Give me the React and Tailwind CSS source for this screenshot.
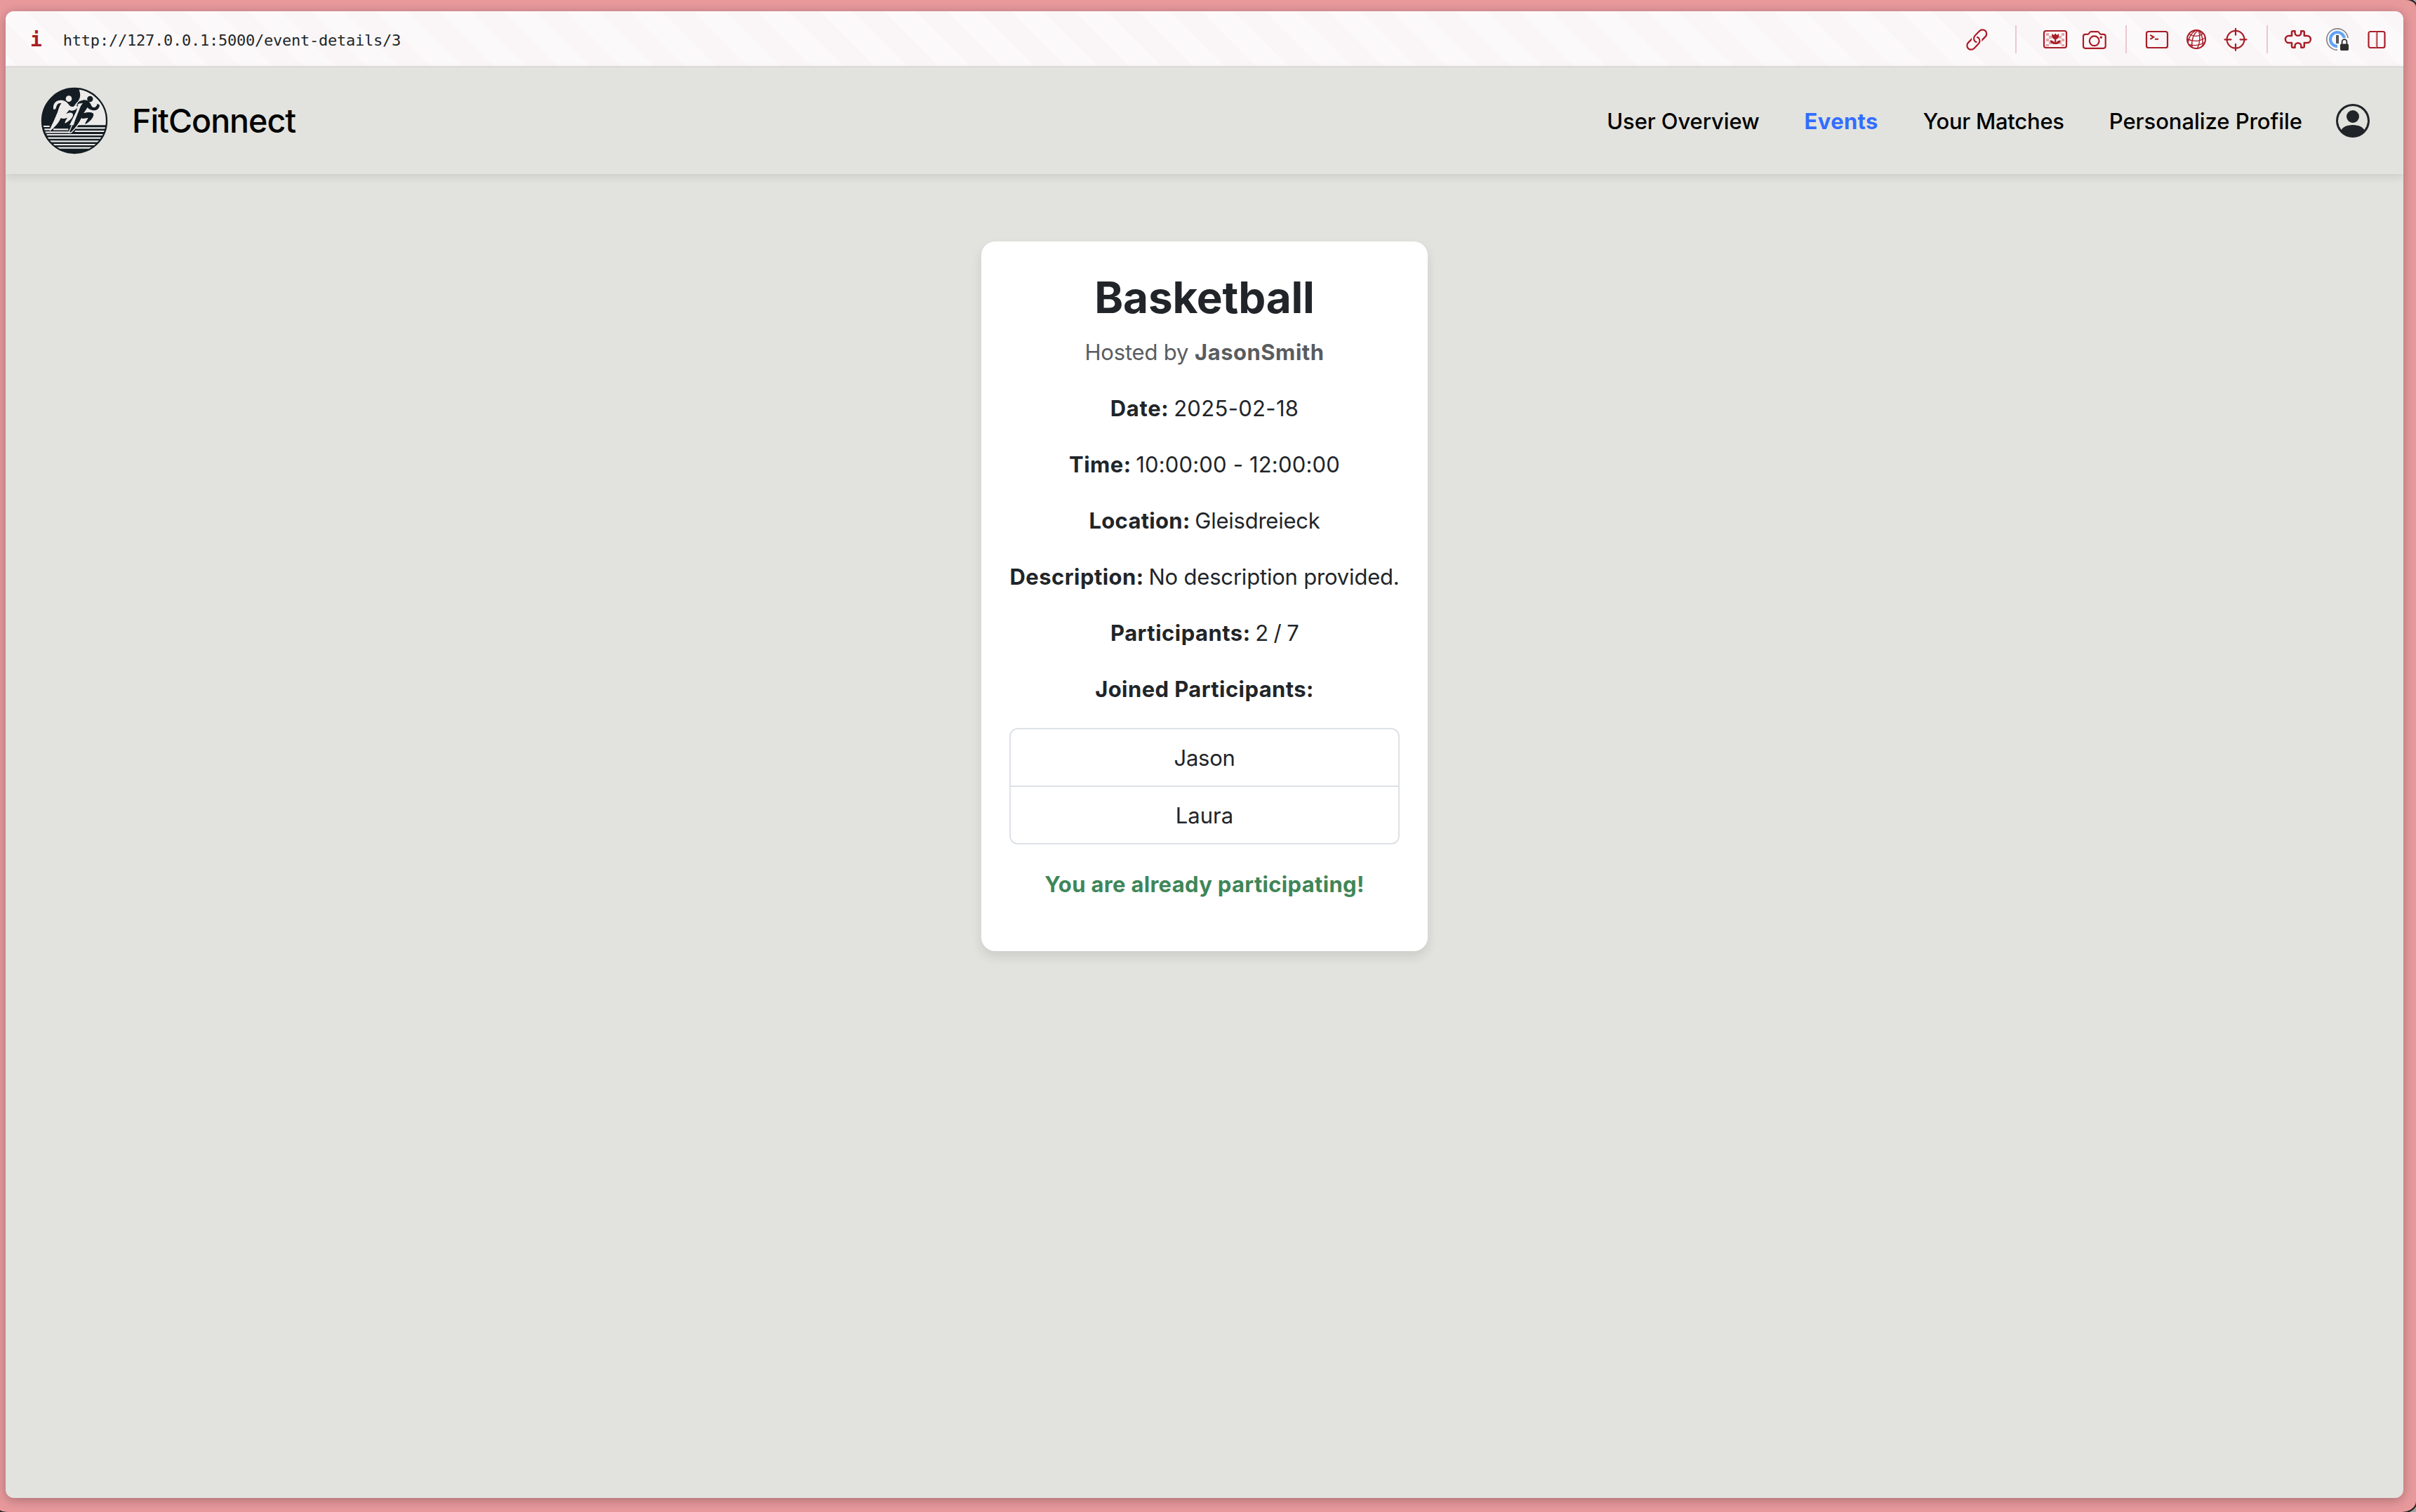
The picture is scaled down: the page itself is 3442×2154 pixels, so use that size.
import React from 'react';
import { BsPersonCircle } from 'react-icons/bs';

const RED = '#a91d27';

function Icon({ children, className = '' }) {
  return (
    <svg
      viewBox="0 0 40 40"
      fill="none"
      stroke={RED}
      strokeWidth="2.2"
      strokeLinecap="round"
      strokeLinejoin="round"
      className={`size-10 shrink-0 ${className}`}
    >
      {children}
    </svg>
  );
}

function LinkIcon() {
  return (
    <Icon>
      <g transform="translate(20.3 20.5) rotate(-46)" strokeLinecap="butt">
        <rect x="-17.5" y="-5.8" width="21" height="11.6" rx="5.8" />
        <path d="M6 -5.8H2.3A5.8 5.8 0 0 0 -3.5 0" stroke="#fbf8fa" strokeWidth="6" />
        <rect x="-3.5" y="-5.8" width="21" height="11.6" rx="5.8" />
        <path d="M-6 5.8H-2.3A5.8 5.8 0 0 0 3.5 0" stroke="#fbf8fa" strokeWidth="6" />
        <path d="M-7 5.8H-2.3A5.8 5.8 0 0 0 3.5 0V-1" />
      </g>
    </Icon>
  );
}

const CHECKS = [
  [7, 11], [11, 15], [7, 19], [11, 23], [7, 27],
  [29, 11], [25, 15], [29, 19], [25, 23], [29, 27],
];

function PictureIcon() {
  return (
    <Icon>
      <g fill="#e2a6ab" stroke="none">
        {CHECKS.map(([x, y]) => (
          <rect key={`${x}-${y}`} x={x} y={y} width="4" height={y === 27 ? 3 : 4} />
        ))}
      </g>
      <rect x="4" y="8" width="32" height="24" rx="3" />
      <path d="M15.2 12l3 2 2-2.6 2 2.6 3-2v3.5a5 4.5 0 0 1-10 0z" fill={RED} stroke="none" />
      <path d="M20.2 18v8" />
      <path d="M20 27c-4 0-7-2-7.5-5.5 4 0 7 2 7.5 5.500zM20.4 27c4 0 7-2 7.5-5.5-4 0-7 2-7.5 5.5z" fill={RED} stroke="none" />
    </Icon>
  );
}

function CameraIcon() {
  return (
    <Icon>
      <path d="M7 12.8h3.2c1.5 0 1.8-.6 2.3-1.7.6-1.4 1-2 2.6-2h9.2c1.6 0 2 .6 2.6 2 .5 1.1.8 1.7 2.3 1.7h3.5a3 3 0 0 1 3 3v14a3 3 0 0 1-3 3H7a3 3 0 0 1-3-3v-14a3 3 0 0 1 3-3z" />
      <circle cx="19.7" cy="22.3" r="6.9" />
      <circle cx="29.3" cy="17.3" r="1.7" fill={RED} stroke="none" />
    </Icon>
  );
}

function TerminalIcon() {
  return (
    <Icon>
      <rect x="5" y="9" width="30" height="23" rx="2.8" />
      <path d="M10.3 13.8l5 3-5 3M17 19.8h5" strokeWidth="2" strokeLinecap="butt" strokeLinejoin="miter" />
    </Icon>
  );
}

function GlobeIcon() {
  return (
    <Icon>
      <circle cx="20" cy="20" r="13" strokeWidth="2" />
      <g strokeWidth="1.4">
        <path d="M23 7.3C16 11 12.5 22 14 31.5M23 7.3c3 7 2.5 18-1.5 25.5M24 7.5c4.5 5 5.5 12 5 22M20 7C14 10 9.5 16 8.2 25" />
        <path d="M9.5 12.5c6 4 14 4 20.5-1M7.2 19.5c8 4 17.5 3.5 25.5-1.5M9.5 27.5c7 2 14.500 1.5 22-3" />
      </g>
    </Icon>
  );
}

function CrosshairIcon() {
  return (
    <Icon>
      <circle cx="20" cy="20.3" r="12.4" />
      <path d="M20 4.8v9M20 26.8v9M4.5 20.3h9M26.5 20.3h9" />
    </Icon>
  );
}

function PuzzleIcon() {
  return (
    <Icon>
      <path
        strokeWidth="2.5"
        d="M12.5 8.2h3v2.2a4.4 4.4 0 0 0 8.8 0v-2.2h3a1.5 1.5 0 0 1 1.5 1.500v5.2h4a5.1 5.1 0 0 1 0 10.2h-4v5.2a1.5 1.5 0 0 1-1.5 1.5h-3v-2.2a4.4 4.4 0 0 0-8.8 0v2.2h-3a1.5 1.5 0 0 1-1.5-1.5v-5.2h-4a5.1 5.1 0 0 1 0-10.2h4v-5.2a1.5 1.5 0 0 1 1.5-1.5z"
      />
    </Icon>
  );
}

function PasswordIcon() {
  return (
    <Icon>
      <circle cx="20" cy="20" r="15.2" stroke="#858585" strokeWidth="1.7" />
      <circle cx="20" cy="20" r="10" stroke="#60a3fb" strokeWidth="4.2" />
      <path d="M20 22h2.5l3-4h10l3 3v16h-18.5z" fill="#fbf8fa" stroke="none" />
      <rect x="18" y="14" width="4" height="12" fill="#555" stroke="none" />
      <rect x="24" y="26.5" width="12" height="9.5" rx="1.8" fill="#2e2e2e" stroke="none" />
      <path d="M26.6 27v-3.500a3.4 3.4 0 0 1 6.8 0v3.5" stroke="#2e2e2e" strokeWidth="1.8" />
    </Icon>
  );
}

function PanelIcon() {
  return (
    <Icon>
      <rect x="8.5" y="9" width="23" height="23" rx="2.5" />
      <path d="M19.2 9v23" stroke="#d99aa0" strokeWidth="1" strokeLinecap="butt" />
      <path d="M20.5 9v23" strokeWidth="1.5" strokeLinecap="butt" />
    </Icon>
  );
}

function Divider({ className }) {
  return <div className={`h-10 w-[2px] shrink-0 bg-[#ebc8cd] ${className}`} />;
}

function Toolbar() {
  return (
    <div className="flex h-20 shrink-0 items-center border-b-2 border-[#e2dddf] bg-[repeating-linear-gradient(45deg,#fcf9fb_0px,#fcf9fb_12px,#faf6f7_12px,#faf6f7_44px,#fcf9fb_44px,#fcf9fb_64px)] pr-[18px] pl-[35px]">
      <span className="pt-[4px] font-['DejaVu_Sans_Mono',monospace] text-[28px] leading-none font-bold text-[#a91d27]">i</span>
      <span className="ml-[30px] pt-[4px] font-['DejaVu_Sans_Mono',monospace] text-[22px] tracking-[-0.24px] text-[#222727]">
        http://127.0.0.1:5000/event-details/3
      </span>
      <div className="ml-auto flex items-center pt-[2px]">
        <LinkIcon />
        <Divider className="mx-[35px]" />
        <div className="flex gap-4">
          <PictureIcon />
          <CameraIcon />
        </div>
        <Divider className="mr-[23px] ml-6" />
        <div className="flex gap-4">
          <TerminalIcon />
          <GlobeIcon />
          <CrosshairIcon />
        </div>
        <Divider className="mr-[23px] ml-6" />
        <div className="flex gap-4">
          <PuzzleIcon />
          <PasswordIcon />
          <PanelIcon />
        </div>
      </div>
    </div>
  );
}

function Logo() {
  const dark = '#141d23';
  const light = '#ecebea';
  return (
    <svg viewBox="51 38 294 294" className="size-[98px] shrink-0">
      <clipPath id="logo-disc">
        <circle cx="198" cy="185" r="139" />
      </clipPath>
      <g clipPath="url(#logo-disc)">
        <rect x="51" y="38" width="294" height="294" fill={light} />
        <path d="M51 38H212C222 60 228 78 216 98L200 122L214 118L206 145L176 206H51Z" fill={dark} />
        <path d="M51 204H345V340H51Z" fill={dark} />
        {/* track lanes */}
        <g stroke={light} strokeWidth="6.5">
          <path d="M66 209H92M70 222H96M108 222H172M204 216H332M74 234H176M200 230H328M80 245H326M84 259H318M90 273H308M98 287H298M112 301H286" />
        </g>
        {/* trailing runner */}
        <g fill={light}>
          <circle cx="174" cy="91" r="13" />
          <path d="M109 137C104 118 114 98 138 97C154 96 166 104 174 116C182 128 192 127 204 118L214 126C204 140 190 146 176 139L162 156C176 149 192 148 192 160C192 172 176 186 158 196C156 188 164 180 168 172C156 176 146 178 140 173C132 194 112 214 92 231C94 214 104 200 110 186L126 148C131 134 134 120 142 111C128 107 122 118 118 135Z" />
        </g>
        {/* leading runner */}
        <path d="M208 122C212 98 230 92 252 98C264 102 268 116 274 126C284 132 294 124 296 112L306 118C304 134 292 144 274 140C264 138 258 134 254 128L238 152C254 148 278 146 280 158C280 172 264 190 244 200C244 190 254 182 256 172C244 174 236 178 228 174C218 196 204 214 186 230L200 186L214 150C220 136 224 122 230 112C220 108 214 112 208 122Z" fill={dark} />
        <path d="M196 132C200 112 214 98 236 96" fill="none" stroke={light} strokeWidth="3" />
        <path d="M232 110C218 122 212 142 204 160C196 186 186 208 174 236L184 236C204 216 220 198 229 176" fill="none" stroke={light} strokeWidth="4" />
        <circle cx="265" cy="92" r="12.5" fill={dark} />
      </g>
      <circle cx="198" cy="185" r="138" fill="none" stroke={dark} strokeWidth="7" />
    </svg>
  );
}

function Header() {
  return (
    <header className="flex h-[152px] shrink-0 items-center bg-[#e2e3de] pr-12 pl-[49px] shadow-[0_4px_12px_rgba(0,0,0,0.1)]">
      <Logo />
      <span className="ml-[33px] pt-[2px] text-[46.5px] font-medium tracking-[-1px] text-black">FitConnect</span>
      <nav className="ml-auto flex items-center gap-16 pt-[2px] text-[31px] font-medium text-black">
        <a className="tracking-[-0.11px]">User Overview</a>
        <a className="font-bold tracking-[0.35px] text-[#336dff]">Events</a>
        <a className="tracking-[-0.26px]">Your Matches</a>
        <a className="tracking-[-0.05px]">Personalize Profile</a>
      </nav>
      <BsPersonCircle className="ml-12 size-12 text-[#212529]" />
    </header>
  );
}

function Row({ label, value, labelClass, valueClass = '' }) {
  return (
    <p className="mb-8 h-12 leading-[48px] whitespace-nowrap">
      <strong className={`font-bold ${labelClass}`}>{label}</strong>{' '}
      <span className={`-ml-[2px] ${valueClass}`}>{value}</span>
    </p>
  );
}

function EventCard() {
  return (
    <section className="mt-24 h-[1011px] w-[636px] rounded-[20px] bg-white px-10 pt-[41px] text-center text-[31px] text-[#212529] shadow-[0_8px_16px_rgba(0,0,0,0.1)]">
      <h1 className="mb-4 h-[77px] text-[62px] leading-[77px] font-bold tracking-[-0.2px]">Basketball</h1>
      <p className="mb-8 h-12 leading-[48px] text-[#595c5f]">
        <span className="tracking-[-0.17px]">Hosted by</span>{' '}
        <strong className="font-bold tracking-[0.5px]">JasonSmith</strong>
      </p>
      <Row label="Date:" value="2025-02-18" labelClass="tracking-[0.7px]" valueClass="tracking-[0.32px]" />
      <Row label="Time:" value="10:00:00 - 12:00:00" labelClass="tracking-[0.44px]" valueClass="tracking-[0.17px]" />
      <Row label="Location:" value="Gleisdreieck" labelClass="tracking-[0.28px]" valueClass="tracking-[-0.24px]" />
      <Row label="Description:" value="No description provided." labelClass="tracking-[0.47px]" valueClass="tracking-[-0.19px]" />
      <Row label="Participants:" value="2 / 7" labelClass="tracking-[0.48px]" valueClass="tracking-[-0.65px]" />
      <p className="mb-[31px] h-12 leading-[48px] font-bold tracking-[0.41px]">Joined Participants:</p>
      <ul className="mb-[33px] rounded-xl border-2 border-[#dee2e6] leading-[80px]">
        <li className="h-20 pt-px tracking-[-0.26px]">Jason</li>
        <li className="h-[82px] border-t-2 border-[#dee2e6] pt-px">Laura</li>
      </ul>
      <p className="h-12 leading-[48px] font-bold tracking-[0.32px] text-[#3f8658]">You are already participating!</p>
    </section>
  );
}

export default function App() {
  return (
    <div className="h-[2154px] w-[3442px] overflow-hidden bg-[linear-gradient(90deg,#0a0a0a_50%,#a3a39f_50%)] font-[Inter,sans-serif]">
      <div className="h-full w-full rounded-tr-[14px_10px] rounded-br-[20px_15px] rounded-bl-[12px_3px] bg-[#e8999c] pt-4 pr-[18px] pb-5 pl-2 shadow-[0_0_0_2px_#1c1c1c]">
        <div className="h-full rounded-[12px] shadow-[0_3px_16px_rgba(0,0,0,0.28)]">
          <div className="flex h-full flex-col overflow-hidden rounded-[12px] bg-[#e2e3de]">
            <Toolbar />
            <Header />
            <main className="flex justify-center">
              <EventCard />
            </main>
          </div>
        </div>
      </div>
    </div>
  );
}
